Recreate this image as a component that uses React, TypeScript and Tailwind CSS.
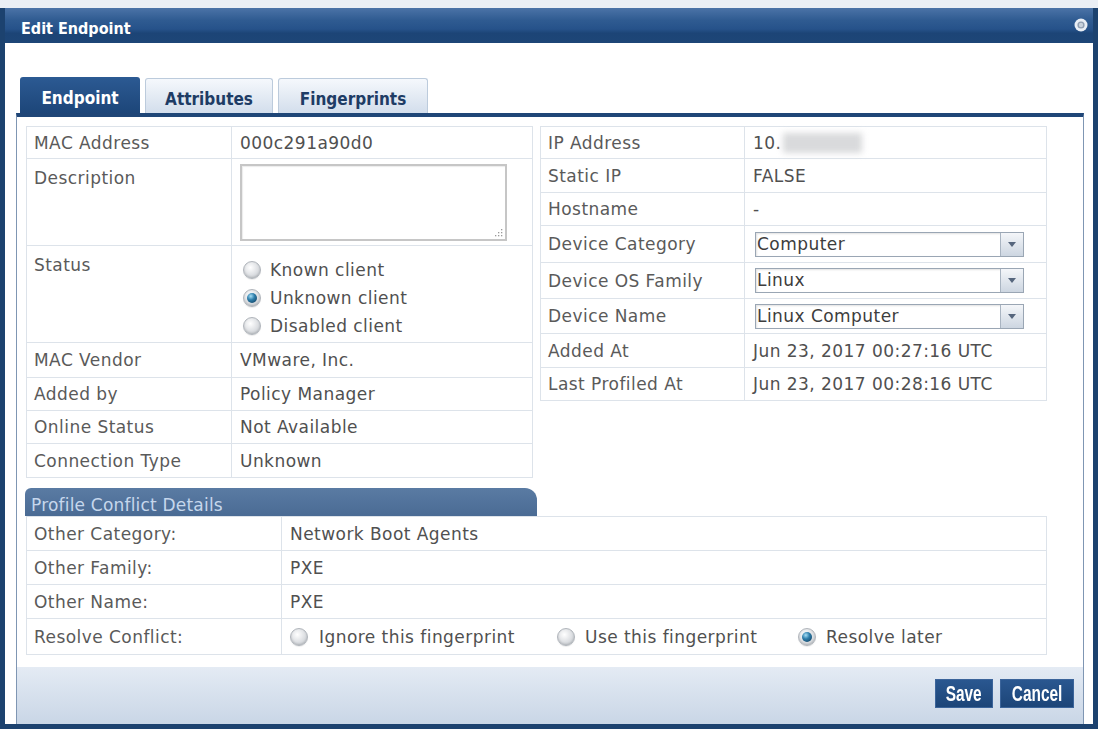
import React from 'react';

const sans = "font-['DejaVu_Sans',Verdana,sans-serif]";
const cond = "font-['DejaVu_Sans_Condensed','DejaVu_Sans',sans-serif]";
const cell = 'border-[#dde3ea]';

const Radio = ({ checked }: { checked?: boolean }) => (
  <span className="inline-flex h-[18px] w-[18px] shrink-0 items-center justify-center rounded-full border border-[#b0b5bb] bg-[radial-gradient(circle_at_40%_35%,#ffffff_0%,#e2e4e7_45%,#bfc4ca_100%)] shadow-[inset_0_-1px_2px_rgba(0,0,0,0.15),0_1px_1px_rgba(0,0,0,0.08)]">
    {checked && (
      <span className="h-[10px] w-[10px] rounded-full bg-[radial-gradient(circle_at_38%_32%,#a6def5_0%,#2f7fac_40%,#0a3250_100%)]" />
    )}
  </span>
);

const Select = ({ value }: { value: string }) => (
  <div className="ml-[2px] flex h-[25px] w-[269px] border border-[#9aa6b4] bg-white shadow-[inset_1px_1px_2px_rgba(0,0,0,0.12)]">
    <span className="flex-1 pl-[1px] leading-[23px] text-[#3d3d3d]">{value}</span>
    <span className="flex w-[23px] items-center justify-center border-l border-[#a9b4c1] bg-gradient-to-b from-[#f4f6f9] to-[#cdd6e1]">
      <svg width="8" height="5" viewBox="0 0 8 5">
        <path d="M0 0h8L4 5z" fill="#56667d" />
      </svg>
    </span>
  </div>
);

type RowProps = {
  label: string;
  h: string;
  top?: boolean;
  last?: boolean;
  labelW?: string;
  children: React.ReactNode;
};

const Row = ({ label, h, top, last, labelW = 'w-[205px]', children }: RowProps) => (
  <div className={`flex ${h} ${last ? '' : 'border-b'} ${cell}`}>
    <div className={`${labelW} shrink-0 border-r ${cell} px-[7px] text-[#5a5a5a] ${top ? 'pt-[9px]' : 'flex items-center'}`}>
      {label}
    </div>
    <div className={`flex-1 px-[8px] text-[#505050] ${top ? '' : 'flex items-center'}`}>{children}</div>
  </div>
);

const btn =
  'flex h-[29px] items-center justify-center overflow-hidden border border-[#3b649a] bg-gradient-to-b from-[#2a5790] to-[#1c4578] text-white';

export default function App() {
  return (
    <div className={`h-[729px] w-[1098px] bg-[#eaeff5] pt-[8px] ${sans} text-[17px] leading-[20px] tracking-[0.45px]`}>
      <div className="flex h-[721px] flex-col border-x-[5px] border-b-[5px] border-[#1c426f] bg-white">
        {/* title bar */}
        <div className="flex h-[35px] shrink-0 items-center justify-between bg-[linear-gradient(to_bottom,#4b73a7_0%,#2f5b91_35%,#26528a_60%,#1c4476_72%,#1d4677_100%)] pl-[16px] pr-[5px]">
          <span className={`${cond} pt-[7px] text-[16px] font-bold tracking-normal text-white`}>Edit Endpoint</span>
          <svg width="14" height="14" viewBox="0 0 14 14" className="mb-[1px]">
            <circle cx="7" cy="7" r="6.5" fill="#e9eef5" />
            <circle cx="7" cy="7" r="3.6" fill="#8f9db0" />
            <circle cx="7" cy="7" r="2.2" fill="#c8d1dc" />
          </svg>
        </div>

        {/* tabs */}
        <div className={`${cond} ml-[15px] mt-[34px] flex h-[36px] shrink-0 items-end gap-[5px] text-[17px] font-bold tracking-normal`}>
          <div className="flex h-[36px] w-[120px] items-center justify-center rounded-t-[3px] bg-gradient-to-b from-[#2c5a93] to-[#1d4679] pt-[5px] text-white">
            Endpoint
          </div>
          <div className="flex h-[35px] w-[128px] items-center justify-center rounded-t-[3px] border border-b-0 border-[#bccbdc] bg-gradient-to-b from-[#f5f8fc] to-[#d3deec] pt-[5px] text-[#1e3c65]">
            Attributes
          </div>
          <div className="flex h-[35px] w-[150px] items-center justify-center rounded-t-[3px] border border-b-0 border-[#bccbdc] bg-gradient-to-b from-[#f5f8fc] to-[#d3deec] pt-[5px] text-[#1e3c65]">
            Fingerprints
          </div>
        </div>

        {/* panel */}
        <div className="ml-[11px] flex w-[1068px] flex-1 flex-col border-x border-t-[4px] border-x-[#7f96b3] border-t-[#1f4677]">
          <div className="flex items-start gap-[7px] pl-[9px] pt-[9px]">
            <div className={`w-[507px] border ${cell}`}>
              <Row label="MAC Address" h="h-[32px]">000c291a90d0</Row>
              <Row label="Description" h="h-[87px]" top>
                <div className="mt-[5px] flex h-[77px] w-[267px] items-end justify-end border-2 border-[#c6c6c6] bg-white p-[2px] shadow-[inset_1px_1px_1px_rgba(0,0,0,0.08)]">
                  <svg width="9" height="9" viewBox="0 0 9 9">
                    <g fill="#9a9a9a">
                      <rect x="7" y="1" width="1.3" height="1.3" />
                      <rect x="7" y="4" width="1.3" height="1.3" />
                      <rect x="7" y="7" width="1.3" height="1.3" />
                      <rect x="4" y="4" width="1.3" height="1.3" />
                      <rect x="4" y="7" width="1.3" height="1.3" />
                      <rect x="1" y="7" width="1.3" height="1.3" />
                    </g>
                  </svg>
                </div>
              </Row>
              <Row label="Status" h="h-[97px]" top>
                <div className="flex flex-col pt-[10px]">
                  {[
                    ['Known client', false],
                    ['Unknown client', true],
                    ['Disabled client', false],
                  ].map(([t, c]) => (
                    <div key={t as string} className="ml-[3px] flex h-[28px] items-center gap-[9px]">
                      <Radio checked={c as boolean} />
                      <span>{t as string}</span>
                    </div>
                  ))}
                </div>
              </Row>
              <Row label="MAC Vendor" h="h-[35px]">VMware, Inc.</Row>
              <Row label="Added by" h="h-[33px]">Policy Manager</Row>
              <Row label="Online Status" h="h-[33px]">Not Available</Row>
              <Row label="Connection Type" h="h-[33px]" last>Unknown</Row>
            </div>

            <div className={`w-[507px] border ${cell}`}>
              <Row label="IP Address" h="h-[32px]" labelW="w-[204px]">
                <span>10.</span>
                <span className="ml-[2px] h-[20px] w-[79px] bg-[#d9dadc] blur-[3px]" />
              </Row>
              <Row label="Static IP" h="h-[34px]" labelW="w-[204px]">FALSE</Row>
              <Row label="Hostname" h="h-[33px]" labelW="w-[204px]">-</Row>
              <Row label="Device Category" h="h-[37px]" labelW="w-[204px]">
                <Select value="Computer" />
              </Row>
              <Row label="Device OS Family" h="h-[36px]" labelW="w-[204px]">
                <Select value="Linux" />
              </Row>
              <Row label="Device Name" h="h-[35px]" labelW="w-[204px]">
                <Select value="Linux Computer" />
              </Row>
              <Row label="Added At" h="h-[34px]" labelW="w-[204px]">Jun 23, 2017 00:27:16 UTC</Row>
              <Row label="Last Profiled At" h="h-[32px]" labelW="w-[204px]" last>
                Jun 23, 2017 00:28:16 UTC
              </Row>
            </div>
          </div>

          {/* profile conflict */}
          <div className="ml-[8px] mt-[10px] flex h-[28px] w-[512px] items-end rounded-tl-[6px] rounded-tr-[12px] bg-gradient-to-b from-[#5a7ba3] to-[#4a6b94] px-[6px] pb-[1px] tracking-[0.2px] text-[#c6d7ec]">
            Profile Conflict Details
          </div>
          <div className={`ml-[9px] w-[1021px] border ${cell}`}>
            <Row label="Other Category:" h="h-[34px]" labelW="w-[255px]">Network Boot Agents</Row>
            <Row label="Other Family:" h="h-[34px]" labelW="w-[255px]">PXE</Row>
            <Row label="Other Name:" h="h-[34px]" labelW="w-[255px]">PXE</Row>
            <Row label="Resolve Conflict:" h="h-[35px]" labelW="w-[255px]" last>
              <div className="flex items-center pt-[1px]">
                <div className="flex w-[267px] items-center gap-[11px]">
                  <Radio />
                  <span>Ignore this fingerprint</span>
                </div>
                <div className="flex w-[241px] items-center gap-[10px]">
                  <Radio />
                  <span>Use this fingerprint</span>
                </div>
                <div className="flex items-center gap-[10px]">
                  <Radio checked />
                  <span>Resolve later</span>
                </div>
              </div>
            </Row>
          </div>

          {/* footer */}
          <div className="mt-auto flex h-[57px] items-start justify-end gap-[7px] bg-gradient-to-b from-[#e4ebf4] to-[#c9d6e6] pr-[9px] pt-[12px]">
            <button className={`${btn} w-[58px]`}>
              <span className="inline-block scale-x-[0.7] font-['Liberation_Sans',Arial,sans-serif] text-[22px] font-bold leading-[24px] tracking-normal">
                Save
              </span>
            </button>
            <button className={`${btn} w-[74px]`}>
              <span className="inline-block scale-x-[0.7] font-['Liberation_Sans',Arial,sans-serif] text-[22px] font-bold leading-[24px] tracking-normal">
                Cancel
              </span>
            </button>
          </div>
        </div>
      </div>
    </div>
  );
}
